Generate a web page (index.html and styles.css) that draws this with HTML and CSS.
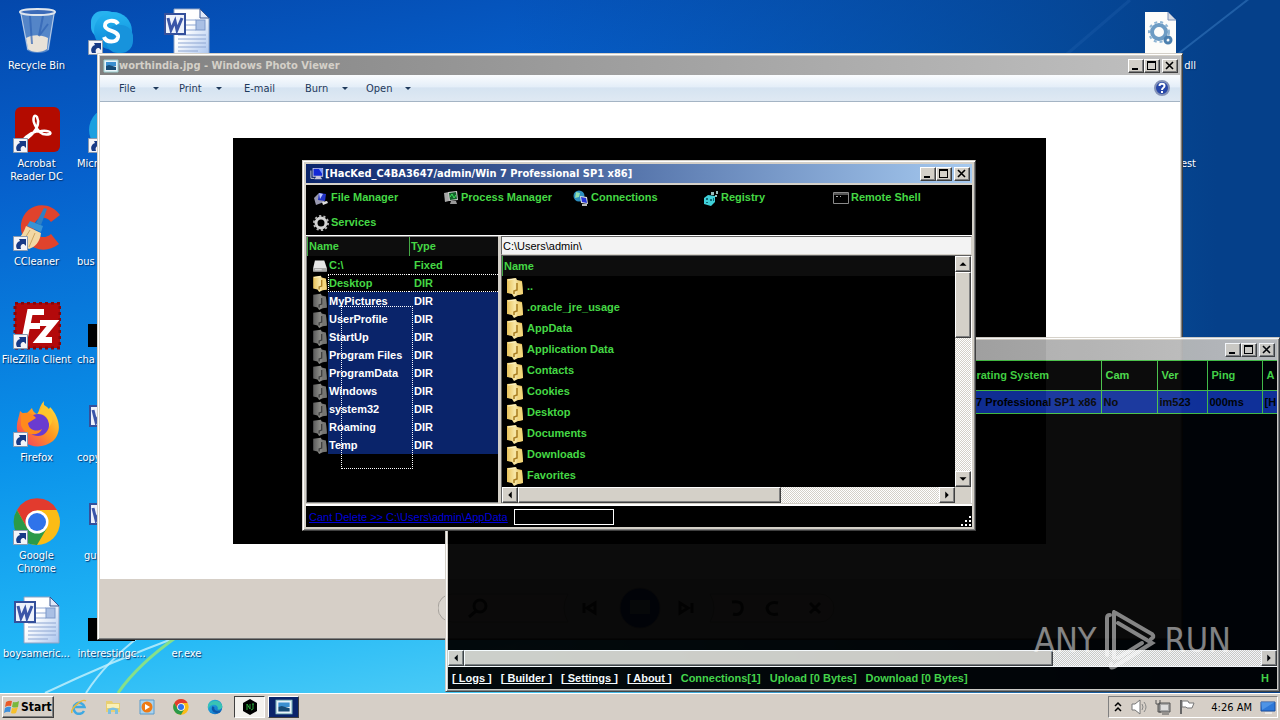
FILE: index.html
```html
<!DOCTYPE html>
<html lang="en">
<head>
<meta charset="utf-8">
<title>Desktop</title>
<link rel="stylesheet" href="styles.css">
</head>
<body>
<svg class="defs" aria-hidden="true">
  <defs>
    <linearGradient id="gFolder" x1="0" x2="1"><stop offset="0" stop-color="#e8c25a"/><stop offset=".5" stop-color="#f8e8a8"/><stop offset="1" stop-color="#d9a93c"/></linearGradient>
    <linearGradient id="gFolderDim" x1="0" x2="1"><stop offset="0" stop-color="#5c5c5c"/><stop offset=".5" stop-color="#8a8a86"/><stop offset="1" stop-color="#606060"/></linearGradient>
    <linearGradient id="gPaper" x1="0" y1="0" x2="1" y2="1"><stop offset=".4" stop-color="#fff"/><stop offset="1" stop-color="#a9c4ee"/></linearGradient>
    <linearGradient id="gFire" x1="1" y1="0" x2="0" y2="1"><stop offset="0" stop-color="#fff04a"/><stop offset=".45" stop-color="#ff9a1f"/><stop offset="1" stop-color="#f4306a"/></linearGradient>
    <linearGradient id="gSkype" x1="0" y1="0" x2="0" y2="1"><stop offset="0" stop-color="#25b5f0"/><stop offset="1" stop-color="#0a86d8"/></linearGradient>
    <linearGradient id="gEdge" x1="0" y1="0" x2="1" y2="1"><stop offset="0" stop-color="#2fc6c9"/><stop offset=".5" stop-color="#1a8fd8"/><stop offset="1" stop-color="#0b5bb5"/></linearGradient>
    <symbol id="folder" viewBox="0 0 18 20"><path d="M1 2l9-1 1 2 5 1 1 13-5 1-4 2-2-3-5-1z" fill="url(#gFolder)"/><path d="M12 4l4 1 1 12-5 1z" fill="#f3d67c"/><path d="M11 6v7l-3 1v3" stroke="#a87c20" stroke-width="1.500" fill="none"/><path d="M2 3l7-1" stroke="#fdf3c6" fill="none"/></symbol>
    <symbol id="folderdim" viewBox="0 0 18 20"><path d="M1 2l9-1 1 2 5 1 1 13-5 1-4 2-2-3-5-1z" fill="url(#gFolderDim)"/><path d="M12 4l4 1 1 12-5 1z" fill="#767672"/><path d="M11 6v7l-3 1v3" stroke="#3c3c3c" stroke-width="1.500" fill="none"/></symbol>
    <symbol id="shortcut" viewBox="0 0 15 15"><path fill="#f4f4f8" stroke="#8a9ab0" d="M.5.5h14v14H.5z"/><path d="M4 13C2 9 4 6 7 5L6 3h7v7l-2-2C8 8 7 10 8 13z" fill="#173a86"/></symbol>
    <symbol id="word" viewBox="0 0 48 48"><path d="M11 1h26l9 9v37H11z" fill="url(#gPaper)" stroke="#8fa3c4" /><path d="M37 1v9h9z" fill="#dfe8f8" stroke="#39558f"/><path d="M22 12h11M22 17h11M22 22h11M15 27h28M15 31h28M15 35h28M15 39h28M15 43h20" stroke="#8ea6d2"/><rect x="33" y="12" width="9" height="10" fill="#a9bfe4" stroke="#7c97c8"/><rect x="2" y="6" width="20" height="20" fill="#eef2fb" stroke="#35509b" stroke-width="2"/><path d="M5 10l3 12 4-9 2 9 5-12" fill="none" stroke="#3b56a8" stroke-width="3"/></symbol>
    <symbol id="chrome" viewBox="0 0 48 48"><circle cx="24" cy="24" r="23" fill="#fbbc16"/><path d="M4 12A23 23 0 0 1 44 12H24L14 30z" fill="#e23b2e"/><path d="M4 12A23 23 0 0 0 24 47L34 30 24 35 14 30z" fill="#2b9a48"/><circle cx="24" cy="24" r="11.500" fill="#fff"/><circle cx="24" cy="24" r="9" fill="#2f73ea"/></symbol>
    <symbol id="photo" viewBox="0 0 16 14"><path fill="#e8f3fa" stroke="#9cc" d="M1 1h14v12H1z"/><path fill="#3b8fd0" d="M3 3h10v4H3z"/><path fill="#174b76" d="M3 7l3-1 7 2v3H3z"/></symbol>
    <symbol id="pc" viewBox="0 0 16 16"><path fill="#c8c8dc" d="M3 1h12v10H3zM7 11h5l2 3H5z"/><path fill="#1229d8" d="M4 2h10v8H4z"/><path fill="#7a9bff" d="M10 2h4v6z"/><path stroke="#ddd" fill="none" d="M1 4v9h4"/></symbol>
    <symbol id="min" viewBox="1 1 14 12"><path d="M4 9h6v2H4z"/></symbol>
    <symbol id="max" viewBox="1 1 14 12"><path d="M3 2h9v9H3zM4 4v6h7V4z" fill-rule="evenodd"/></symbol>
    <symbol id="close" viewBox="1 1 14 12"><path d="M4 3l7 7M11 3l-7 7" stroke="#000" stroke-width="1.600" fill="none"/></symbol>
    <symbol id="up" viewBox="0 0 16 16"><path d="M4 10h8L8 6z"/></symbol>
    <symbol id="down" viewBox="0 0 16 16"><path d="M4 6h8l-4 4z"/></symbol>
    <symbol id="left" viewBox="0 0 16 16"><path d="M10 4v8L6 8z"/></symbol>
    <symbol id="right" viewBox="0 0 16 16"><path d="M6 4v8l4-4z"/></symbol>
    <symbol id="edge" viewBox="0 0 48 48"><circle cx="24" cy="24" r="22" fill="url(#gEdge)"/><path d="M3 20C8 4 42-2 46 22c0 9-10 12-15 9 5-9-5-17-16-13C8 20 4 26 3 32z" fill="#39c3b4"/><path d="M16 22c-5 10 2 20 14 20 6 0 10-4 12-6-9 3-22 0-20-12z" fill="#0e55a6"/></symbol>
  </defs>
</svg>

<main class="desktop">
  <svg class="wallpaper" viewBox="0 0 1280 693" preserveAspectRatio="none" aria-hidden="true">
    <path d="M45 693Q110 662 180 636" stroke="#c8f2fc" stroke-width="2" opacity=".8" fill="none"/>
    <path d="M86 693Q106 662 140 636" stroke="#c5f0fc" stroke-width="2" opacity=".8" fill="none"/>
    <path d="M118 693Q138 664 178 636" stroke="#86e08a" stroke-width="3" fill="none"/>
    <path d="M1080 130 1250-2" stroke="#3b7ec4" stroke-width="2" opacity=".5" fill="none"/>
    <path d="M1060 60 1130 0" stroke="#2463b0" stroke-width="3" opacity=".3" fill="none"/>
  </svg>

  <div class="icons">
    <figure class="item"><svg class="pic" viewBox="0 0 48 48"><path d="M7 4h35l-6 38c-4 4-18 4-22 0z" fill="#7fa4d4" opacity=".65"/><path d="M13 30c8-4 15-3 22 0l-1 11c-5 4-15 4-19 0z" fill="#e8e2d8"/><path d="M17 8l2 28M30 8l-4 20 9-12" stroke="#2f62b4" stroke-width="2" fill="none" opacity=".7"/><path d="M8 6l7 36M41 6l-6 36" stroke="#b9cde8" fill="none"/><ellipse cx="24.500" cy="4" rx="17.500" ry="3" fill="#3c6bb8" stroke="#dfe6ee" stroke-width="2"/></svg><figcaption>Recycle Bin</figcaption></figure>
    <figure class="item"><svg class="pic" viewBox="0 0 48 48"><rect x="3" y="3" width="27" height="27" rx="11" fill="#28b2ef"/><circle cx="25" cy="23" r="19" fill="url(#gSkype)"/><rect x="18" y="17" width="27" height="28" rx="12" fill="#1793dc"/><path d="M30 16c-3-5-14-4-13 2 1 6 14 4 13 11-1 6-12 6-14 0" fill="none" stroke="#fff" stroke-width="4"/></svg><svg class="link"><use href="#shortcut"/></svg></figure>
    <figure class="item"><svg class="pic"><use href="#word"/></svg></figure>

    <figure class="item"><svg class="pic" viewBox="0 0 48 48"><rect x="2" y="1" width="45" height="45" rx="6" fill="#b30b00"/><path d="M9 35c6-2 20-13 15-24-3-4-5 2-2 8 3 7 8 11 15 9 2-2-3-4-9-3-6 0-13 3-19 10z" fill="none" stroke="#fff" stroke-width="2.500"/></svg><svg class="link"><use href="#shortcut"/></svg><figcaption>Acrobat<br>Reader DC</figcaption></figure>
    <figure class="item"><svg class="pic" viewBox="0 0 48 48"><circle cx="24" cy="24" r="23" fill="#1ba0e0"/></svg><svg class="link"><use href="#shortcut"/></svg><figcaption class="cut">Micr</figcaption></figure>
    <figure class="item"></figure>

    <figure class="item"><svg class="pic" viewBox="0 0 48 48"><path d="M47 11C36-5 11-1 8 20c-2 20 20 34 38 20l-8-10c-8 7-17 1-17-7 0-9 11-13 17-5z" fill="#e0432c"/><path d="M31 4l3 1-6 16-5-2z" fill="#2d7fc4"/><path d="M17 17l13 5-2 6-14-6z" fill="#3693d6"/><path d="M13 22l15 7c-1 9-6 14-12 16L3 37c5-4 8-9 10-15z" fill="#f3d9a4"/><path d="M17 26l-8 13M22 29l-6 14" stroke="#cda560" fill="none"/></svg><svg class="link"><use href="#shortcut"/></svg><figcaption>CCleaner</figcaption></figure>
    <figure class="item"><figcaption class="cut">bus</figcaption></figure>
    <figure class="item"></figure>

    <figure class="item"><svg class="pic" viewBox="0 0 48 48"><rect x="2" y="1" width="45" height="45" fill="#b3090b" stroke="#86060a" stroke-width="3" stroke-dasharray="3 3"/><path d="M11 40l6-30h14M14 24h13M27 21h13L26 38h13" fill="none" stroke="#fff" stroke-width="6"/></svg><svg class="link"><use href="#shortcut"/></svg><figcaption>FileZilla Client</figcaption></figure>
    <figure class="item"><span class="console"></span><figcaption class="cut">cha</figcaption></figure>
    <figure class="item"></figure>

    <figure class="item"><svg class="pic" viewBox="0 0 48 48"><path d="M31 1c-1 6 3 9 3 9 3-1 3-3 3-3 9 9 13 25 3 34-12 10-33 6-36-11-1-8 2-12 3-19l5 4 7-7c1 4 4 6 6 6 1-5 3-10 6-13z" fill="url(#gFire)"/><circle cx="25" cy="25" r="11" fill="#6a3bd0"/><path d="M8 14c6-3 12 0 15 4l-8 5c1 8 9 9 14 6-3 8-18 7-21-4z" fill="#ff8a1c"/><path d="M24 14c8-2 13 5 12 13 8-9 1-19-5-22z" fill="#ffc52c"/></svg><svg class="link"><use href="#shortcut"/></svg><figcaption>Firefox</figcaption></figure>
    <figure class="item"><svg class="pic"><use href="#word"/></svg><figcaption class="cut">copy</figcaption></figure>
    <figure class="item"></figure>

    <figure class="item"><svg class="pic"><use href="#chrome"/></svg><svg class="link"><use href="#shortcut"/></svg><figcaption>Google<br>Chrome</figcaption></figure>
    <figure class="item"><svg class="pic"><use href="#word"/></svg><figcaption class="cut short">gu</figcaption></figure>
    <figure class="item"></figure>

    <figure class="item"><svg class="pic"><use href="#word"/></svg><figcaption>boysameric...</figcaption></figure>
    <figure class="item"><span class="console"></span><figcaption>interestingc...</figcaption></figure>
    <figure class="item"><figcaption>er.exe</figcaption></figure>
  </div>

  <div class="icons-right">
    <figure class="item"><svg class="pic" viewBox="0 0 48 48"><path d="M9 4h23l8 8v36H9z" fill="#fcfcfa"/><path d="M32 4v8h8z" fill="#d8dce4" stroke="#7890b8"/><circle cx="23" cy="24" r="7" fill="none" stroke="#6d9cc4" stroke-width="4"/><circle cx="23" cy="24" r="10" fill="none" stroke="#8db4d4" stroke-width="2" stroke-dasharray="3 3"/><circle cx="32" cy="32" r="3" fill="none" stroke="#4b7fae" stroke-width="3"/></svg><figcaption>dll</figcaption></figure>
    <figure class="item"><figcaption>est</figcaption></figure>
  </div>

  <section class="window viewer" aria-label="Windows Photo Viewer">
    <header class="title">
      <svg class="ticon"><use href="#photo"/></svg><h2>worthindia.jpg - Windows Photo Viewer</h2>
      <div class="ctl"><button aria-label="Minimize"><svg><use href="#min"/></svg></button><button aria-label="Maximize"><svg><use href="#max"/></svg></button><button class="x" aria-label="Close"><svg><use href="#close"/></svg></button></div>
    </header>
    <nav class="menu">
      <button class="drop">File</button><button class="drop">Print</button><button class="mail">E-mail</button><button class="drop">Burn</button><button class="drop">Open</button>
      <button class="help" aria-label="Help"><svg viewBox="0 0 16 16"><circle cx="8" cy="8" r="7" fill="#2747a8" stroke="#8593b8" stroke-width="2"/><path d="M5.500 6c0-3 5-3 5 0 0 2-2.500 1.500-2.500 4M8 11v2" fill="none" stroke="#fff" stroke-width="2"/></svg></button>
    </nav>
    <div class="canvas"><div class="photo"></div></div>
    <footer class="controls">
      <svg viewBox="0 0 404 44" aria-hidden="true"><path d="M14 8h116q-8 14 0 28H14a14 14 0 0 1 0-28zM272 8h110a14 14 0 0 1 0 28H272q8-14 0-28z" fill="#dad5ce" stroke="#a7a29c"/><circle cx="202" cy="22" r="20" fill="#1c43a8" stroke="#8b90a0"/><path d="M192 14h20v14h-20z" fill="#7dafc0"/><g fill="none" stroke="#303030" stroke-width="3"><circle cx="42" cy="20" r="6"/><path d="M38 25l-7 6M146 17v10M157 17l-8 5 8 5zM242 17l8 5-8 5zM254 17v10M294 16q12-2 10 8-2 6-9 4M340 17q-9-2-11 5 1 8 11 6M372 17l10 10M382 17l-10 10"/></g></svg>
    </footer>
  </section>

  <section class="window rat" aria-label="Connections">
    <header class="title">
      <div class="ctl"><button aria-label="Minimize"><svg><use href="#min"/></svg></button><button aria-label="Maximize"><svg><use href="#max"/></svg></button><button class="x" aria-label="Close"><svg><use href="#close"/></svg></button></div>
    </header>
    <div class="clients">
      <table>
        <colgroup><col class="c-lead"><col><col class="c-cam"><col class="c-ver"><col class="c-ping"><col class="c-act"></colgroup>
        <thead><tr><th></th><th>Operating System</th><th>Cam</th><th>Ver</th><th>Ping</th><th>A</th></tr></thead>
        <tbody><tr><td></td><td>Win 7 Professional SP1 x86</td><td>No</td><td>im523</td><td>000ms</td><td>[H</td></tr></tbody>
      </table>
    </div>
    <div class="hbar"><button aria-label="Scroll left"><svg><use href="#left"/></svg></button><span class="thumb wide"></span><span class="track"></span><button aria-label="Scroll right"><svg><use href="#right"/></svg></button></div>
    <footer class="rstatus"><a href="#">[ Logs ]</a><a href="#">[ Builder ]</a><a href="#">[ Settings ]</a><a href="#">[ About ]</a><span>Connections[1]</span><span>Upload [0 Bytes]</span><span>Download [0 Bytes]</span><b>H</b></footer>
  </section>

  <section class="window manager" aria-label="File manager">
    <header class="title active">
      <svg class="ticon"><use href="#pc"/></svg><h2>[HacKed_C4BA3647/admin/Win 7 Professional SP1 x86]</h2>
      <div class="ctl"><button aria-label="Minimize"><svg><use href="#min"/></svg></button><button aria-label="Maximize"><svg><use href="#max"/></svg></button><button class="x" aria-label="Close"><svg><use href="#close"/></svg></button></div>
    </header>
    <nav class="tools">
      <button><svg viewBox="0 0 16 16"><path fill="#9a9ab0" d="M1 8l5-5 4 1 1 8-8 3z"/><path fill="#2233c8" d="M6 3l7 1-1 7-7-1z"/><path fill="#b9c2ff" d="M6 3l4 1-3 5z"/><path fill="#ddd" d="M9 12l5-1 1 2-5 2z"/></svg>File Manager</button>
      <button><svg viewBox="0 0 16 16"><path fill="#a8a8a8" d="M1 3l5-1v9l-4 1z"/><path fill="#ccc" d="M5 2l9-1 1 9-9 1z"/><path fill="#12602a" d="M6 3l7-1 1 7-7 1z"/><path d="M7 7l2-3 2 4 2-3" stroke="#3ce05c" fill="none"/><path fill="#999" d="M8 11h5l1 3H7z"/></svg>Process Manager</button>
      <button><svg viewBox="0 0 16 16"><circle cx="6" cy="6" r="5.500" fill="#2d8fc0"/><path d="M3 2l4 1-1 4-4 1z" fill="#8fe0b0"/><path fill="#ddd" d="M7 6l7 1 1 7-7-1z"/><path fill="#2233d8" d="M8 7l5 1 1 5-5-1z"/><path fill="#bbb" d="M9 14h5v2H9z"/></svg>Connections</button>
      <button><svg viewBox="0 0 16 16"><path fill="#3fd0d8" d="M1 8l4-3 7 1v6l-4 4-7-2z"/><path fill="#116a78" d="M3 8h2v2H3zM7 9h2v2H7zM3 12h2v1H3zM10 8h1v3h-1z"/><path fill="#9bb" d="M8 2h3v3H8zM13 1h2v3h-2zM12 5h2v2h-2z"/></svg>Registry</button>
      <button><svg viewBox="0 0 16 16"><path fill="#000" stroke="#8a8a8a" d="M.5 2.500h15v11H.500z"/><path stroke="#aaa" d="M1 4h14M3 6.500h2M7 6.500h1" fill="none"/></svg>Remote Shell</button>
      <button><svg viewBox="0 0 16 16"><circle cx="8" cy="8" r="5" fill="none" stroke="#d4d4d4" stroke-width="3"/><circle cx="8" cy="8" r="7" fill="none" stroke="#b8b8b8" stroke-width="2" stroke-dasharray="2.200 2.200"/></svg>Services</button>
    </nav>
    <div class="panes">
      <div class="places">
        <table>
          <colgroup><col class="c-ico"><col class="c-name"><col></colgroup>
          <thead><tr><th colspan="2">Name</th><th>Type</th></tr></thead>
          <tbody>
            <tr><td><svg viewBox="0 0 18 20"><path d="M3 4h11l3 9v4H1v-4z" fill="#e6e6e6"/><path d="M1 13h16v4H1z" fill="#a8a8a8"/><path d="M3 15h8" stroke="#eee"/></svg></td><td>C:\</td><td>Fixed</td></tr>
            <tr class="focus"><td><svg><use href="#folder"/></svg></td><td>Desktop</td><td>DIR</td></tr>
            <tr class="sel"><td><svg><use href="#folderdim"/></svg></td><td>MyPictures</td><td>DIR</td></tr>
            <tr class="sel"><td><svg><use href="#folderdim"/></svg></td><td>UserProfile</td><td>DIR</td></tr>
            <tr class="sel"><td><svg><use href="#folderdim"/></svg></td><td>StartUp</td><td>DIR</td></tr>
            <tr class="sel"><td><svg><use href="#folderdim"/></svg></td><td>Program Files</td><td>DIR</td></tr>
            <tr class="sel"><td><svg><use href="#folderdim"/></svg></td><td>ProgramData</td><td>DIR</td></tr>
            <tr class="sel"><td><svg><use href="#folderdim"/></svg></td><td>Windows</td><td>DIR</td></tr>
            <tr class="sel"><td><svg><use href="#folderdim"/></svg></td><td>system32</td><td>DIR</td></tr>
            <tr class="sel"><td><svg><use href="#folderdim"/></svg></td><td>Roaming</td><td>DIR</td></tr>
            <tr class="sel"><td><svg><use href="#folderdim"/></svg></td><td>Temp</td><td>DIR</td></tr>
          </tbody>
        </table>
        <div class="marquee"></div>
      </div>
      <div class="browse">
        <input class="path" type="text" aria-label="Path" value="C:\Users\admin\">
        <div class="listbox">
          <div class="files">
            <table>
              <colgroup><col class="c-fico"><col></colgroup>
              <thead><tr><th colspan="2">Name</th></tr></thead>
              <tbody>
                <tr><td><svg><use href="#folder"/></svg></td><td>..</td></tr>
                <tr><td><svg><use href="#folder"/></svg></td><td>.oracle_jre_usage</td></tr>
                <tr><td><svg><use href="#folder"/></svg></td><td>AppData</td></tr>
                <tr><td><svg><use href="#folder"/></svg></td><td>Application Data</td></tr>
                <tr><td><svg><use href="#folder"/></svg></td><td>Contacts</td></tr>
                <tr><td><svg><use href="#folder"/></svg></td><td>Cookies</td></tr>
                <tr><td><svg><use href="#folder"/></svg></td><td>Desktop</td></tr>
                <tr><td><svg><use href="#folder"/></svg></td><td>Documents</td></tr>
                <tr><td><svg><use href="#folder"/></svg></td><td>Downloads</td></tr>
                <tr><td><svg><use href="#folder"/></svg></td><td>Favorites</td></tr>
                <tr><td><svg><use href="#folder"/></svg></td><td></td></tr>
              </tbody>
            </table>
          </div>
          <div class="vbar"><button aria-label="Scroll up"><svg><use href="#up"/></svg></button><span class="thumb"></span><span class="track"></span><button aria-label="Scroll down"><svg><use href="#down"/></svg></button></div>
          <div class="hbar"><button aria-label="Scroll left"><svg><use href="#left"/></svg></button><span class="thumb"></span><span class="track"></span><button aria-label="Scroll right"><svg><use href="#right"/></svg></button></div>
        </div>
      </div>
    </div>
    <footer class="mstatus"><a href="#">Cant Delete &gt;&gt; C:\Users\admin\AppData</a><span class="progress"></span>
      <svg class="grip" viewBox="0 0 12 12"><path fill="#fff" d="M9 1h2v2H9zM5 5h2v2H5zM9 5h2v2H9zM1 9h2v2H1zM5 9h2v2H5zM9 9h2v2H9z"/></svg></footer>
  </section>

  <div class="brand">
    <span>ANY</span>
    <svg viewBox="0 0 56 62" aria-hidden="true"><path d="M5 46V9q0-3 3-3M12 3v46M12 3l38 22q3 3-1 5M16 14l34 20L12 58q-4 2-3-3M16 49l24-15" fill="none" stroke="#fff" stroke-width="4" stroke-linecap="round"/></svg>
    <span>RUN</span>
  </div>
</main>

<footer class="taskbar">
  <button class="start"><svg viewBox="0 0 16 16"><path fill="#e85a28" d="M2 3q3-2 6-1L7 7q-3-1-6 1z"/><path fill="#79b83c" d="M9 3q3 1 6-1l-1 6q-3 1-6 0z"/><path fill="#3c8fdc" d="M1 9q3-2 6-1l-1 5q-3-1-6 1z"/><path fill="#f6c02c" d="M8 9q3 1 6-1l-2 6q-3 1-5 0z"/></svg>Start</button>
  <div class="quick">
    <button aria-label="Internet Explorer"><svg viewBox="0 0 16 16"><path d="M13 12A5.500 5.500 0 1 1 13.500 8H4" fill="none" stroke="#3fa9e2" stroke-width="2.500"/><path d="M1 14C-1 10 11-1 15 2" stroke="#e9b93a" fill="none" stroke-width="1.500"/></svg></button>
    <button aria-label="Explorer"><svg viewBox="0 0 16 16"><path fill="#e8cf72" d="M1 2h6l1 2h7v9H1z"/><path fill="#fbf0b4" d="M2 5h12v4H2z"/><path fill="#7dc0e0" d="M3 15v-5q5-3 10 0v5h-3v-4H6v4z"/></svg></button>
    <button aria-label="Media Player"><svg viewBox="0 0 16 16"><path fill="#a8d2ee" stroke="#5a9ccc" d="M1 1h14v14H1z"/><circle cx="8" cy="8" r="5.500" fill="#ee7a14"/><path fill="#fff" d="M6 5l5 3-5 3z"/></svg></button>
    <button aria-label="Chrome"><svg><use href="#chrome"/></svg></button>
    <button aria-label="Edge"><svg><use href="#edge"/></svg></button>
  </div>
  <button class="task on" aria-label="Client"><svg viewBox="0 0 16 16"><path d="M8 0l7 4v8l-7 4-7-4V4z"/><path d="M5 11V5l3 5V5M11 5v5l-2 1M10 5h2" stroke="#2aa83a" fill="none"/></svg></button>
  <button class="task dark" aria-label="Photo Viewer"><svg><use href="#photo"/></svg></button>
  <div class="tray">
    <svg class="small" viewBox="0 0 10 12"><path d="M2 5l3-3 3 3M2 10l3-3 3 3" fill="none" stroke="#000" stroke-width="1.500"/></svg>
    <svg viewBox="0 0 16 16"><path d="M1 5h3l5-4v14l-5-4H1z" fill="#fff" stroke="#777"/><path d="M11 5q2 3 0 6M13 3q4 5 0 10" fill="none" stroke="#888"/></svg>
    <svg viewBox="0 0 16 16"><path d="M4 4h11v9H4zM7 15h7" fill="#a8a8a8" stroke="#555"/><path d="M1 1v4h4V1M3 5v8h3" fill="none" stroke="#555"/><path d="M6 6h7v5H6z" fill="#ddd"/></svg>
    <svg viewBox="0 0 16 16"><path d="M2 1v14" stroke="#666" stroke-width="2"/><path d="M3 2h6l1 2h5l-2 5H8L7 8H3z" fill="#fff" stroke="#777"/></svg>
    <time>4:26 AM</time>
    <svg viewBox="0 0 16 16"><path d="M1 3h14v9H1z" fill="#2d78d8" stroke="#1a4c9c"/><path d="M1 3h14L2 11z" fill="#6fb0f4" opacity=".5"/><path d="M5 14h7" stroke="#fff"/></svg>
  </div>
</footer>
</body>
</html>
```

FILE: styles.css
```css
* { box-sizing: border-box; }

html, body { height: 100%; }

body {
  margin: 0;
  display: flex;
  flex-direction: column;
  overflow: hidden;
  font: 11px/13px "DejaVu Sans Condensed", "DejaVu Sans", sans-serif;
  color: #000;
}

button {
  font: inherit;
  color: inherit;
  background: none;
  border: 0;
  padding: 0;
}

svg { display: block; }
.defs { position: absolute; width: 0; height: 0; }

/* Desktop */
.desktop {
  position: relative;
  flex: 1;
  overflow: hidden;
  background:
    linear-gradient(90deg, transparent 40%, #05408a 95%),
    linear-gradient(170deg, #0448ac 0%, #0660cc 20%, #0a92ea 50%, #22b8f6 72%, #7ce2f6 100%);
}

.wallpaper { position: absolute; inset: 0; width: 100%; height: 100%; }

.icons {
  position: relative;
  display: grid;
  grid-template-columns: 75px 75px 75px;
  grid-auto-rows: 98px;
  width: 225px;
  margin-left: -1px;
  padding-top: 8px;
}

.item {
  position: relative;
  margin: 0;
  display: flex;
  flex-direction: column;
  align-items: center;
  justify-content: flex-start;
  color: #fff;
  font-size: 11px;
  line-height: 13px;
  text-align: center;
  white-space: nowrap;
}

.item .pic { width: 48px; height: 48px; flex: none; }
.item .link { position: absolute; left: 14px; top: 32px; width: 15px; height: 15px; }
.item figcaption { margin: auto 0 0; height: 47px; text-shadow: 1px 1px 1px #06306a; }
.item figcaption.cut { align-self: flex-start; padding-left: 3px; }
.item figcaption.short { padding-left: 10px; }
.console { width: 47px; height: 23px; margin-top: 22px; background: #000; }

.icons-right {
  position: absolute;
  top: 8px;
  right: 84px;
  display: grid;
  grid-auto-rows: 98px;
  width: 60px;
}
.icons-right .item { align-items: flex-start; }
.icons-right figcaption { align-self: flex-end; }

/* Windows */
.window {
  position: absolute;
  display: flex;
  flex-direction: column;
  padding: 2px;
  border: 1px solid;
  border-color: #d4d0c8 #404040 #404040 #d4d0c8;
  background: #d4d0c8;
  box-shadow: inset 1px 1px #fff, inset -1px -1px #808080;
}

.title {
  display: flex;
  align-items: center;
  flex: none;
  height: 19px;
  padding: 0 2px 0 3px;
  background: linear-gradient(90deg, #808080, #c0c0c0);
  color: #d4d0c8;
}
.title.active { background: linear-gradient(90deg, #0a246a, #a6caf0); color: #fff; }
.title h2 { margin: 0; font-size: 11px; line-height: 16px; white-space: nowrap; }
.ticon { width: 16px; height: 14px; flex: none; }
.ctl { display: flex; margin-left: auto; }
.ctl button, .hbar button, .vbar button {
  background: #d4d0c8;
  border: 1px solid;
  border-color: #fff #404040 #404040 #fff;
  box-shadow: inset -1px -1px #808080;
}
.ctl button { width: 16px; height: 14px; overflow: hidden; }
.ctl svg { width: 14px; height: 12px; }
.ctl .x { margin-left: 2px; }

/* Photo viewer */
.viewer { inset: 53px 97px 53px 97px; }
.menu {
  display: flex;
  flex: none;
  align-items: center;
  height: 27px;
  padding: 0 10px 0 19px;
  background: linear-gradient(#fafcfe, #e4eef8 45%, #d5e3f1 50%, #dfe9f3);
  border-bottom: 1px solid #a4b4c4;
  color: #1e395b;
}
.menu .drop { display: flex; align-items: center; justify-content: space-between; width: 40px; margin-right: 20px; }
.menu .drop::after { content: ""; border: 3px solid transparent; border-top-color: #1e395b; border-bottom: 0; }
.menu .drop:nth-child(2) { width: 43px; margin-right: 22px; }
.menu .mail { width: 61px; text-align: left; }
.menu .drop:nth-child(4) { width: 43px; margin-right: 18px; }
.menu .drop:nth-child(5) { width: 45px; }
.menu .help { margin-left: auto; }
.help svg { width: 16px; height: 16px; }
.canvas { flex: 1; min-height: 0; background: #fff; padding: 36px 134px 35px 133px; }
.photo { height: 100%; background: #000; }
.controls {
  flex: none;
  height: 58px;
  display: flex;
  align-items: center;
  justify-content: center;
  background: #d6cfc7;
}
.controls svg { width: 404px; height: 44px; }

/* Connections window */
.rat {
  inset: 337px 0 1px 445px;
  opacity: .95;
  font: bold 11px/13px "Liberation Sans", Arial, sans-serif;
  color: #45d845;
  background: #d4d0c8;
}
.rat .title { height: 20px; background: linear-gradient(90deg, #808080, #c0c0c0); }
.clients { flex: 1; min-height: 0; background: #000; overflow: hidden; }
.clients table, .places table, .files table { width: 100%; border-collapse: collapse; table-layout: fixed; text-align: left; white-space: nowrap; }
.clients th, .clients td { border: 1px solid #45c045; border-left: 0; padding: 0 4px; overflow: hidden; }
.clients th { height: 30px; }
.clients td { height: 23px; color: #000; background: #10309a; padding: 0 2px; }
.clients tr > :first-child { border-right: 0; }
.clients tr > :last-child { border-right: 0; }
.c-lead { width: 503px; }
.c-cam { width: 56px; }
.c-ver { width: 50px; }
.c-ping { width: 55px; }
.c-act { width: 15px; }

.hbar { display: flex; flex: none; height: 16px; }
.hbar button, .vbar button { width: 16px; height: 16px; flex: none; overflow: hidden; }
.hbar button svg, .vbar button svg { width: 14px; height: 14px; }
.track { flex: 1; background: repeating-conic-gradient(#fff 0 25%, #d4d0c8 0 50%) 0 0 / 2px 2px; }
.thumb {
  background: #d4d0c8;
  border: 1px solid;
  border-color: #fff #404040 #404040 #fff;
  box-shadow: inset -1px -1px #808080;
}
.thumb.wide { width: 71%; }

.rstatus {
  display: flex;
  flex: none;
  align-items: center;
  gap: 9px;
  height: 23px;
  padding: 0 8px 0 4px;
  background: #000;
  border-top: 1px solid #fff;
  white-space: nowrap;
}
.rstatus a { color: #fff; }
.rstatus b { margin-left: auto; }

/* File manager */
.manager {
  inset: 160px 304px 162px 302px;
  padding: 3px;
  font: bold 11px/13px "Liberation Sans", Arial, sans-serif;
  color: #45d845;
}
.manager .title { font-family: "DejaVu Sans Condensed", "DejaVu Sans", sans-serif; }
.tools {
  flex: none;
  display: grid;
  grid-template-columns: repeat(auto-fill, 130px);
  grid-auto-rows: 25px;
  margin-top: 2px;
  padding-left: 7px;
  background: #000;
}
.tools button { display: flex; align-items: center; gap: 2px; font-weight: bold; white-space: nowrap; }
.tools svg { width: 16px; height: 16px; }

.panes {
  flex: 1;
  min-height: 0;
  display: grid;
  grid-template-columns: 192px minmax(0, 1fr);
  gap: 3px;
  padding-bottom: 1px;
  border-top: 1px solid #fff;
}
.places { position: relative; background: #000; border: 1px solid #808080; border-right: 0; overflow: hidden; }
.places table, .files table { border-collapse: separate; border-spacing: 0; }
.places th, .files th { height: 19px; padding: 0 1px; background: #0d0d0d; border-left: 1px solid #45a845; }
.places td { height: 18px; padding: 0; }
.places td svg { width: 16px; height: 17px; margin-left: 5px; }
.places td:nth-child(2) { padding-left: 1px; }
.places td:nth-child(3) { padding-left: 5px; }
.c-ico { width: 21px; }
.c-name { width: 81px; }
.places .focus td:nth-child(n+2) { border-top: 1px dotted #fff; border-bottom: 1px dotted #fff; }
.places .focus td:nth-child(2) { border-left: 1px dotted #fff; padding-left: 0; }
.sel { color: #fff; }
.sel td:nth-child(n+2) { background: #0a246a; }
.marquee {
  position: absolute;
  left: 34px;
  top: 69px;
  width: 72px;
  height: 163px;
  border: 1px dotted #fff;
}

.browse { display: flex; flex-direction: column; min-height: 0; }
.path {
  flex: none;
  width: 100%;
  height: 19px;
  padding: 0 1px;
  border: 1px solid;
  border-color: #606060 #d4d0c8 #d4d0c8 #606060;
  background: #f3f3f3;
  color: #000;
  font: 11px/13px "Liberation Sans", Arial, sans-serif;
}
.listbox {
  flex: 1;
  min-height: 0;
  display: grid;
  grid-template: minmax(0, 1fr) 16px / minmax(0, 1fr) 16px;
  border: 1px solid #606060;
  border-right-color: #fff;
  border-bottom: 0;
  background: #d4d0c8;
}
.files { background: #000; overflow: hidden; }
.files th { height: 20px; }
.files td { height: 21px; padding: 0; }
.files td svg { width: 18px; height: 20px; margin-left: 4px; }
.c-fico { width: 25px; }
.vbar { display: flex; flex-direction: column; }
.vbar .thumb { height: 66px; }
.listbox .hbar .thumb { width: 58%; }
.listbox .hbar { min-width: 0; }

.mstatus {
  display: flex;
  flex: none;
  align-items: center;
  gap: 6px;
  height: 23px;
  padding: 1px 0 0 3px;
  background: #000;
  border-top: 2px solid #fff;
  font-weight: normal;
  white-space: nowrap;
}
.mstatus a { color: #0000d8; }
.progress { width: 100px; height: 16px; border: 1px solid #fff; }
.grip { width: 12px; height: 12px; margin: auto 0 0 auto; }

.brand {
  position: absolute;
  right: 49px;
  bottom: 22px;
  display: flex;
  align-items: center;
  gap: 6px;
  opacity: .5;
  color: #fff;
  font: 34px/40px "DejaVu Sans Condensed", "DejaVu Sans", sans-serif;
  pointer-events: none;
}
.brand svg { width: 56px; height: 62px; }

/* Taskbar */
.taskbar {
  flex: none;
  display: flex;
  align-items: center;
  height: 27px;
  padding: 0 2px;
  border-top: 1px solid #fff;
  background: #d6cfc7;
}
.start {
  display: flex;
  align-items: center;
  gap: 1px;
  width: 52px;
  height: 22px;
  padding-left: 1px;
  border: 1px solid;
  border-color: #fff #404040 #404040 #fff;
  box-shadow: inset -1px -1px #808080;
  font-weight: bold;
}
.start svg { width: 16px; height: 16px; flex: none; }
.start { font-size: 12px; }
.quick { display: flex; gap: 18px; margin: 0 11px 0 17px; }
.quick svg, .task svg { width: 16px; height: 16px; }
.task { display: flex; align-items: center; justify-content: center; width: 31px; height: 22px; margin-right: 3px; border: 1px solid; }
.task svg { width: 18px; height: 16px; }
.task.on { background: #f4f2ee; border-color: #404040 #fff #fff #404040; }
.task.dark { background: #0a246a; border-color: #fff #404040 #404040 #fff; }
.tray {
  display: flex;
  align-items: center;
  gap: 8px;
  height: 22px;
  margin-left: auto;
  padding: 0 1px 0 4px;
  border: 1px solid;
  border-color: #808080 #fff #fff #808080;
  white-space: nowrap;
}
.tray svg { width: 16px; height: 16px; }
.tray .small { width: 10px; height: 12px; }
.tray time { margin: 0 0 0 8px; }
```
